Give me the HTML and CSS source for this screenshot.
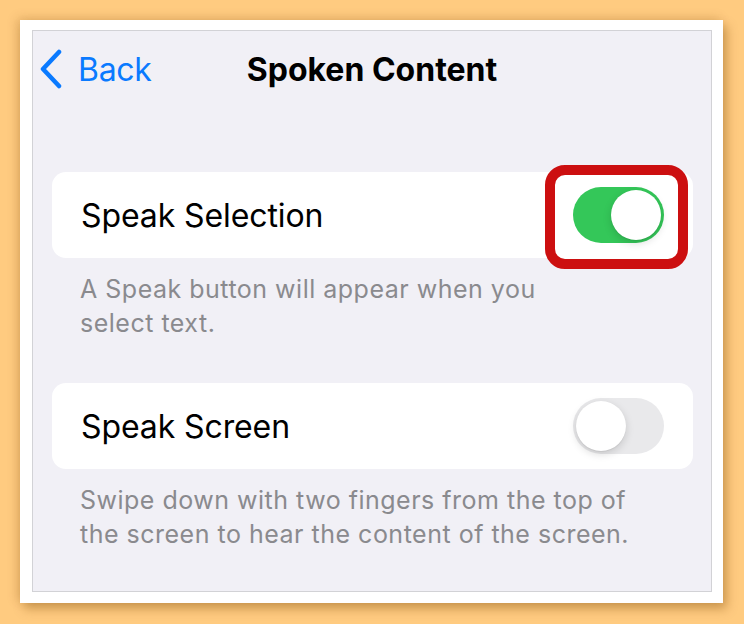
FILE: index.html
```html
<!DOCTYPE html>
<html lang="en">
<head>
    <meta charset="UTF-8">
    <meta name="viewport" content="width=device-width, initial-scale=1.0">
    <title>Spoken Content</title>
    <link rel="stylesheet" href="styles.css">
</head>
<body>
    <div class="frame">
        <div class="screen">
            <!-- Navigation bar -->
            <div class="nav">
                <a class="back" href="#">
                    <svg class="chevron" width="26" height="40" viewBox="0 0 26 40">
                        <path d="M21 3 L5 20 L21 37" fill="none" stroke="#0a7aff" stroke-width="4.5" stroke-linecap="round" stroke-linejoin="round"/>
                    </svg>
                    <span>Back</span>
                </a>
                <h1 class="title">Spoken Content</h1>
                <div></div>
            </div>

            <!-- Speak Selection -->
            <div class="group first">
                <div class="row">
                    <span class="label">Speak Selection</span>
                    <div class="switch-wrap">
                        <span class="highlight"></span>
                        <div class="switch on"><span class="knob"></span></div>
                    </div>
                </div>
            </div>
            <p class="footer">A Speak button will appear when you<br>select text.</p>

            <!-- Speak Screen -->
            <div class="group">
                <div class="row">
                    <span class="label">Speak Screen</span>
                    <div class="switch-wrap">
                        <div class="switch"><span class="knob"></span></div>
                    </div>
                </div>
            </div>
            <p class="footer">Swipe down with two fingers from the top of<br>the screen to hear the content of the screen.</p>
        </div>
    </div>
</body>
</html>
```

FILE: styles.css
```css
body {
    margin: 0;
    background-color: #ffcb80;
    font-family: Inter, "Noto Sans", sans-serif;
    height: 624px;
    overflow: hidden;
}
.frame {
    margin: 20px 0 0 20px;
    width: 703px;
    height: 583px;
    box-sizing: border-box;
    padding: 10px 11px 11px 12px;
    background: #fff;
    box-shadow: 4px 6px 10px rgba(120, 70, 0, 0.35), -3px -2px 10px rgba(120, 70, 0, 0.2);
}
.screen {
    height: 100%;
    box-sizing: border-box;
    background: #f1f0f6;
    border: 1px solid #d2d2d6;
}
.nav {
    display: grid;
    grid-template-columns: 1fr auto 1fr;
    align-items: center;
    height: 76px;
    padding: 0 5px;
}
.back {
    display: flex;
    align-items: center;
    gap: 14px;
    color: #0a7aff;
    text-decoration: none;
    font-size: 32px;
    letter-spacing: -0.3px;
}
.chevron {
    display: block;
}
.title {
    margin: 0;
    font-size: 32px;
    font-weight: 700;
    color: #000;
    letter-spacing: 0;
}
.group {
    margin: 0 18px 0 19px;
    background: #fff;
    border-radius: 14px;
}
.group.first {
    margin-top: 65px;
}
.row {
    display: flex;
    align-items: center;
    justify-content: space-between;
    height: 86px;
    padding: 0 29px 0 29px;
}
.label {
    font-size: 32px;
    color: #000;
    letter-spacing: -0.1px;
}
.switch-wrap {
    position: relative;
}
.switch {
    position: relative;
    width: 91px;
    height: 56px;
    border-radius: 28px;
    background: #e9e9eb;
    display: flex;
    align-items: center;
    padding: 0 3px;
    box-sizing: border-box;
}
.switch.on {
    background: #34c759;
    justify-content: flex-end;
}
.knob {
    width: 50px;
    height: 50px;
    border-radius: 50%;
    background: #fff;
    box-shadow: 0 3px 8px rgba(0, 0, 0, 0.15), 0 1px 1px rgba(0, 0, 0, 0.06);
}
.highlight {
    position: absolute;
    top: -22px;
    right: -24px;
    bottom: -26px;
    left: -28px;
    border: 10px solid #cc0f10;
    border-radius: 20px;
    background: #fff;
}
.footer {
    margin: 14px 18px 43px 47px;
    font-size: 25px;
    line-height: 34px;
    letter-spacing: 0.5px;
    color: #8a8a8e;
}
```
